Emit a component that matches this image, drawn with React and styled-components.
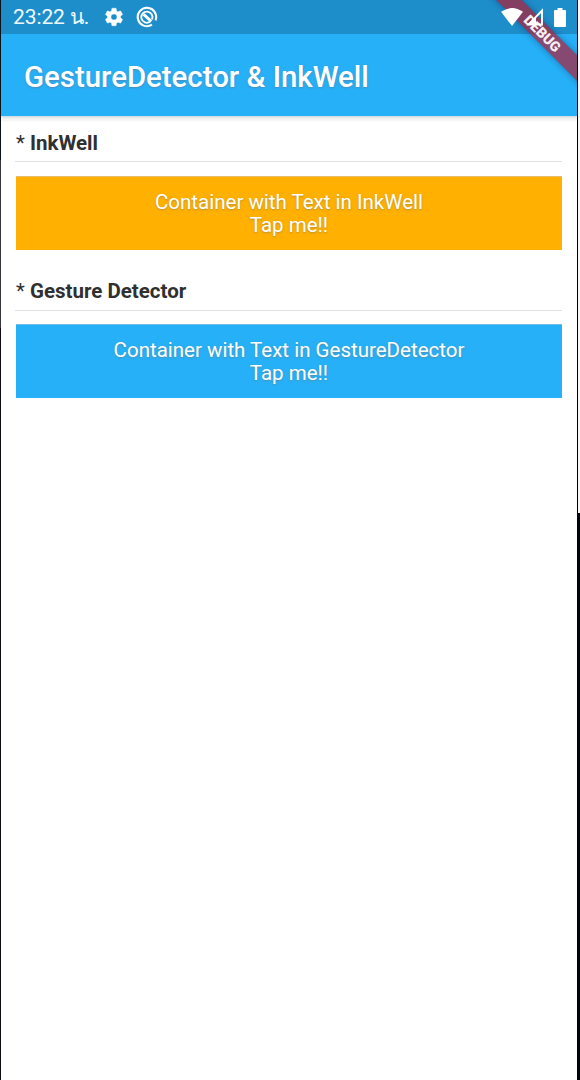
import React from "react";
import styled, { createGlobalStyle } from "styled-components";

const Global = createGlobalStyle`
  *, *::before, *::after { box-sizing: border-box; }
  body { margin: 0; background: #000; font-family: Roboto, "Noto Sans", sans-serif; }
`;

const Desktop = styled.div`
  display: flex;
  width: 580px;
  height: 1080px;
  background: linear-gradient(#0b1119 0 160px, #33363b 160px 328px, #0a0d12 328px);
  padding-left: 1px;
  overflow: hidden;
`;

const Phone = styled.main`
  position: relative;
  display: flex;
  flex-direction: column;
  width: 576px;
  height: 1080px;
  background: #fff;
  overflow: hidden;
`;

const Edge = styled.div`
  flex: 1;
  border-left: 1px solid #000;
  background: linear-gradient(#f8f8f8 0 513px, #00060d 513px);
`;

const StatusBar = styled.div`
  display: flex;
  align-items: center;
  height: 34px;
  flex: none;
  padding: 0 11px 0 12px;
  background: #1e8ecb;
  color: #fff;
`;

const Clock = styled.span`
  width: 90px;
  font-size: 21px;
  line-height: 34px;
  white-space: nowrap;
  letter-spacing: -0.1px;
  color: #eef9ff;
`;

const StatusIcon = styled.svg`
  position: relative;
  z-index: 2;
  display: block;
  flex: none;
  margin-left: ${(p) => p.$gap || 0}px;
`;

const Spacer = styled.div`
  flex: 1;
`;

const AppBar = styled.header`
  display: flex;
  align-items: center;
  height: 82px;
  flex: none;
  padding: 3px 23px 0;
  background: #26b0f8;
  box-shadow: 0 1px 2px rgba(40, 90, 130, 0.2), 0 5px 2px rgba(0, 0, 0, 0.05);
`;

const Title = styled.h1`
  margin: 0;
  font-size: 29.4px;
  font-weight: 500;
  line-height: 36px;
  white-space: nowrap;
  color: #fff;
  text-shadow: 0 1px 2px rgba(110, 110, 130, 0.55);
`;

const Content = styled.div`
  display: flex;
  flex-direction: column;
  padding: 14px 15px 0 14px;
`;

const Section = styled.section`
  display: flex;
  flex-direction: column;
  height: 148px;
`;

const Heading = styled.h2`
  margin: 0;
  height: ${(p) => p.$height}px;
  padding: 1px 0 0 1px;
  border-bottom: 1px solid #e2e2e2;
  font-size: 20.5px;
  font-weight: 700;
  line-height: 25px;
  white-space: nowrap;
  color: #303030;
`;

const Bullet = styled.span`
  font-weight: 400;
`;

const TapBox = styled.div`
  height: 74px;
  margin: auto 0 28px 1px;
  padding-top: 15px;
  background: ${(p) => p.$color};
  box-shadow: inset 0 1px ${(p) => p.$edge};
  font-size: 20.5px;
  line-height: 23px;
  text-align: center;
  white-space: pre-line;
  color: #fff;
  text-shadow: 0 1px 2px rgba(120, 120, 110, 0.55);
`;

const RibbonCorner = styled.div`
  position: absolute;
  top: 0;
  right: 0;
  width: 100px;
  height: 100px;
  overflow: hidden;
  pointer-events: none;
`;

const Ribbon = styled.div`
  position: absolute;
  top: 23px;
  left: -6px;
  width: 140px;
  height: 18px;
  padding-left: 4px;
  transform: rotate(45deg);
  background: rgba(183, 22, 44, 0.66);
  box-shadow: 0 0 7px rgba(0, 30, 60, 0.4);
  font-size: 14.2px;
  font-weight: 900;
  line-height: 18px;
  text-align: center;
  color: #f6eef0;
`;

function Gear() {
  return (
    <StatusIcon width="22" height="22" viewBox="0 0 24 24" fill="#fff" stroke="#fff" strokeWidth="0.4">
      <path d="M19.14 12.94c.04-.3.06-.61.06-.94s-.02-.64-.07-.94l2.03-1.58a.49.49 0 0 0 .12-.61l-1.92-3.32a.49.49 0 0 0-.59-.22l-2.39.96a7 7 0 0 0-1.62-.94l-.36-2.54a.48.48 0 0 0-.48-.41h-3.84a.47.47 0 0 0-.47.41l-.36 2.54c-.59.24-1.13.57-1.62.94l-2.39-.96a.48.48 0 0 0-.59.22L2.74 8.87a.47.47 0 0 0 .12.61l2.03 1.58c-.05.3-.09.63-.09.94s.02.64.07.94l-2.03 1.58a.49.49 0 0 0-.12.61l1.92 3.32c.12.22.37.29.59.22l2.39-.96c.5.38 1.03.7 1.62.94l.36 2.54c.05.24.24.41.48.41h3.84c.24 0 .44-.17.47-.41l.36-2.54a7 7 0 0 0 1.62-.94l2.39.96c.22.08.47 0 .59-.22l1.92-3.32a.47.47 0 0 0-.12-.61zM12 15.3a3.3 3.3 0 1 1 0-6.6 3.3 3.3 0 0 1 0 6.6z" />
    </StatusIcon>
  );
}

function Swirl() {
  return (
    <StatusIcon $gap={11} width="22" height="22" viewBox="0 0 22 22" fill="none" stroke="#fff">
      <path d="M16 18.7A9.2 9.2 0 1 1 19.5 14.4" strokeWidth="2.1" />
      <path d="M14 15.8A5.6 5.6 0 1 1 16 13.4" strokeWidth="1.8" />
      <path d="M7.6 8.4L15.4 15.4" strokeWidth="2.8" />
    </StatusIcon>
  );
}

function Wifi() {
  return (
    <StatusIcon width="22" height="18" viewBox="0 0 22 18" fill="#fff">
      <path d="M0 3.8Q11-3.8 22 3.8L11 18Z" />
    </StatusIcon>
  );
}

function Signal() {
  return (
    <StatusIcon $gap={3} width="18" height="18" viewBox="0 0 18 18" fill="none">
      <path d="M16 2.5V16.5H2.5Z" stroke="#fff" strokeWidth="1.9" />
      <path d="M2 17L10 9V17Z" fill="#fff" />
    </StatusIcon>
  );
}

function Battery() {
  return (
    <StatusIcon $gap={10} width="12" height="19" viewBox="0 0 12 19" fill="#fff">
      <path d="M3.5 0h5v2H11a1 1 0 0 1 1 1v15a1 1 0 0 1-1 1H1a1 1 0 0 1-1-1V3a1 1 0 0 1 1-1h2.5z" />
    </StatusIcon>
  );
}

export default function App() {
  return (
    <Desktop>
      <Global />
      <Phone>
        <StatusBar>
          <Clock>23:22 น.</Clock>
          <Gear />
          <Swirl />
          <Spacer />
          <Wifi />
          <Signal />
          <Battery />
        </StatusBar>
        <AppBar>
          <Title>GestureDetector &amp; InkWell</Title>
        </AppBar>
        <Content>
          <Section>
            <Heading $height={32}><Bullet>*</Bullet> InkWell</Heading>
            <TapBox $color="#ffb000" $edge="#e3bd6c">{"Container with Text in InkWell\nTap me!!"}</TapBox>
          </Section>
          <Section>
            <Heading $height={33}><Bullet>*</Bullet> Gesture Detector</Heading>
            <TapBox $color="#26b0f8" $edge="#72bde6">{"Container with Text in GestureDetector\nTap me!!"}</TapBox>
          </Section>
        </Content>
        <RibbonCorner>
          <Ribbon>DEBUG</Ribbon>
        </RibbonCorner>
      </Phone>
      <Edge />
    </Desktop>
  );
}
